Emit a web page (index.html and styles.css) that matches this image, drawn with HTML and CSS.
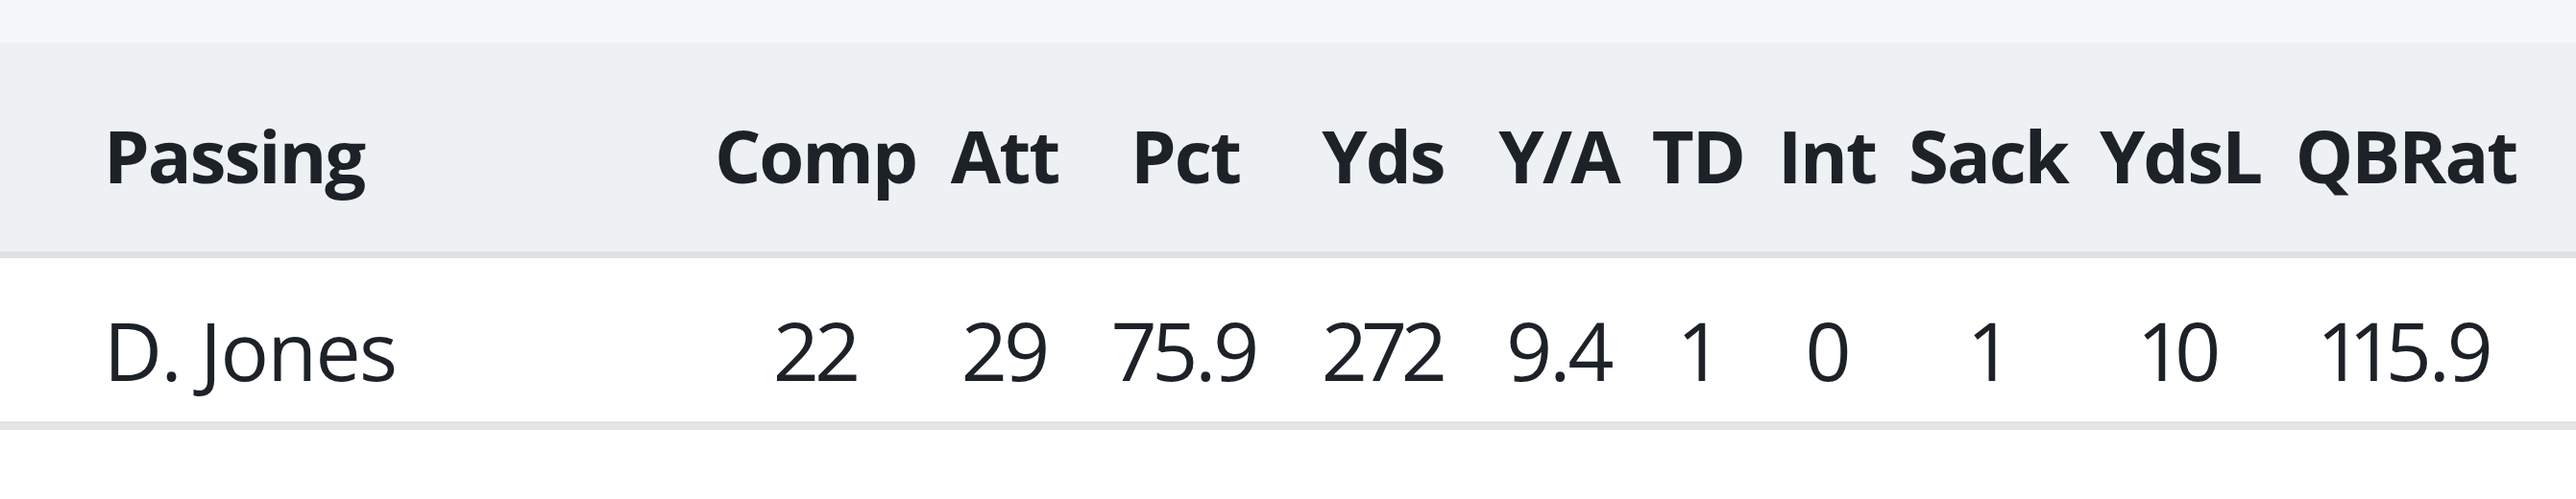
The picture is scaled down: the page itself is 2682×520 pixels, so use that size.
FILE: index.html
```html
<!DOCTYPE html>
<html lang="en">
<head>
    <meta charset="UTF-8">
    <meta name="viewport" content="width=device-width, initial-scale=1.0">
    <title>Box Score - Passing</title>
    <link rel="stylesheet" href="styles.css">
</head>
<body>

<div class="top-strip"></div>

<table class="stats">
    <colgroup>
        <col class="col-name">
        <col style="width: 222px">
        <col style="width: 172px">
        <col style="width: 204px">
        <col style="width: 208px">
        <col style="width: 158px">
        <col style="width: 132px">
        <col style="width: 136px">
        <col style="width: 200px">
        <col style="width: 200px">
        <col style="width: 312px">
    </colgroup>
    <thead>
        <tr>
            <th class="name">Passing</th>
            <th>Comp</th>
            <th>Att</th>
            <th>Pct</th>
            <th>Yds</th>
            <th>Y/A</th>
            <th>TD</th>
            <th>Int</th>
            <th>Sack</th>
            <th>YdsL</th>
            <th class="last">QBRat</th>
        </tr>
    </thead>
    <tbody>
        <tr>
            <td class="name player">D. Jones</td>
            <td>22</td>
            <td>29</td>
            <td>75.9</td>
            <td>272</td>
            <td>9.4</td>
            <td>1</td>
            <td>0</td>
            <td>1</td>
            <td>10</td>
            <td class="last">115.9</td>
        </tr>
    </tbody>
</table>

</body>
</html>
```

FILE: styles.css
```css
body {
    margin: 0;
    background-color: #fff;
    font-family: "Open Sans", "Noto Sans", sans-serif;
    color: #1d2128;
}

.top-strip {
    height: 45px;
    background-color: #f4f7f9;
}

.stats {
    width: 100%;
    table-layout: fixed;
    border-collapse: separate;
    border-spacing: 0;
}

.col-name {
    width: 738px;
}

.stats th,
.stats td {
    text-align: center;
    white-space: nowrap;
    padding: 0;
    font-variant-numeric: proportional-nums;
}

.stats th {
    background-color: #eef1f4;
    font-size: 76px;
    font-weight: 700;
    letter-spacing: -2px;
    line-height: 100px;
    padding-top: 67px;
    padding-bottom: 50px;
    border-bottom: 7px solid #dfe2e5;
}

.stats td {
    font-size: 84px;
    font-weight: 400;
    letter-spacing: -3px;
    line-height: 100px;
    padding-top: 46px;
    padding-bottom: 24px;
    border-bottom: 9px solid #e4e5e6;
}

.stats .name {
    text-align: left;
    padding-left: 108px;
}

.stats .player {
    letter-spacing: -1.5px;
}

.stats .last {
    padding-right: 42px;
}
```
